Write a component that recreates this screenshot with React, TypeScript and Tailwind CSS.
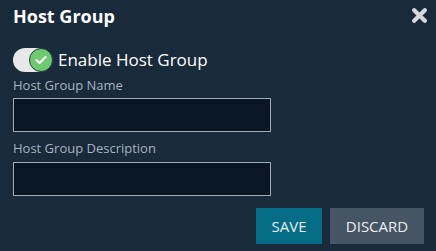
import type React from "react"

const CloseIcon: React.FC = () => (
  <svg width="15" height="15" viewBox="0 0 15 15" className="block">
    <path d="M2.2 2.2 L12.8 12.8 M12.8 2.2 L2.2 12.8" stroke="#d3d8dd" strokeWidth="4.2" strokeLinecap="round" />
  </svg>
)

const Toggle: React.FC = () => (
  <div className="relative w-[40px] h-[24px] shrink-0">
    <div className="absolute left-0 top-0 w-[36px] h-[24px] rounded-full bg-[#e6e8ea]" />
    <div className="absolute left-[16px] top-0 w-[24px] h-[24px] rounded-full bg-[#6dcb6f] border-[1.5px] border-[#24384a] flex items-center justify-center">
      <svg width="12" height="10" viewBox="0 0 12 10">
        <path d="M1.5 5.2 L4.6 8 L10.5 2" fill="none" stroke="#ffffff" strokeWidth="2.2" strokeLinecap="round" strokeLinejoin="round" />
      </svg>
    </div>
  </div>
)

export default function App() {
  return (
    <div className="w-[436px] h-[251px] bg-[#192a3b] font-['Open_Sans',sans-serif] pl-[13px] pr-[12px] pt-[4px] flex flex-col">
      <div className="flex items-start justify-between">
        <h2 className="text-[18px] leading-[24px] font-bold text-white">Host Group</h2>
        <div className="mt-[4px] mr-[-3px]">
          <CloseIcon />
        </div>
      </div>

      <div className="mt-[20px] flex items-center gap-[5px] h-[24px]">
        <Toggle />
        <span className="text-[17px] leading-[24px] text-white">Enable Host Group</span>
      </div>

      <label className="mt-[4px] text-[13px] leading-[18px] text-[#a8b3be]">Host Group Name</label>
      <input className="mt-[4px] w-[258px] h-[34px] bg-[#091626] border border-[#a3abb3] outline-none text-white px-2" />

      <label className="mt-[7px] text-[13px] leading-[18px] text-[#a8b3be]">Host Group Description</label>
      <input className="mt-[5px] w-[258px] h-[34px] bg-[#091626] border border-[#a3abb3] outline-none text-white px-2" />

      <div className="mt-[12px] flex justify-end gap-[8px]">
        <button className="w-[66px] h-[36px] bg-[#046d85] text-[#e8eef2] text-[15px] uppercase">Save</button>
        <button className="w-[94px] h-[36px] bg-[#455563] text-[#e8eef2] text-[15px] uppercase">Discard</button>
      </div>
    </div>
  )
}
